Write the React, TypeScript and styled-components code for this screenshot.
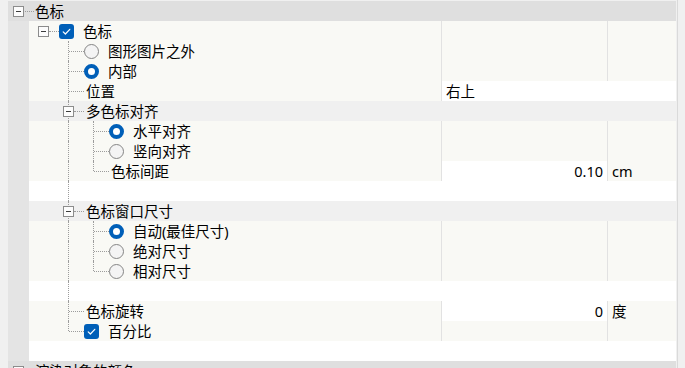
import styled, { createGlobalStyle } from "styled-components";

const GlobalStyle = createGlobalStyle`
  html, body {
    margin: 0;
    padding: 0;
    background: #f0f0f0;
  }
  body {
    font-family: "Noto Sans", "Noto Sans CJK SC", sans-serif;
    font-size: 14.5px;
    color: #000;
  }
`;

type Tone = "cream" | "gray" | "white";
type SlotKind = "blank" | "pipe" | "tee" | "elbow" | "expander" | "expander-pipe";
type Control = "check" | "radio-on" | "radio-off";

interface RowData {
  slots: SlotKind[];
  label?: string;
  control?: Control;
  tone: Tone;
  value?: string;
  unit?: string;
  span?: boolean;
}

const rows: RowData[] = [
  { slots: ["expander"], control: "check", label: "色标", tone: "cream" },
  { slots: ["blank", "tee"], control: "radio-off", label: "图形图片之外", tone: "cream" },
  { slots: ["blank", "tee"], control: "radio-on", label: "内部", tone: "cream" },
  { slots: ["blank", "tee"], label: "位置", tone: "cream", value: "右上", span: true },
  { slots: ["blank", "expander-pipe"], label: "多色标对齐", tone: "gray" },
  { slots: ["blank", "pipe", "tee"], control: "radio-on", label: "水平对齐", tone: "cream" },
  { slots: ["blank", "pipe", "tee"], control: "radio-off", label: "竖向对齐", tone: "cream" },
  { slots: ["blank", "pipe", "elbow"], label: "色标间距", tone: "cream", value: "0.10", unit: "cm" },
  { slots: ["blank", "pipe"], tone: "white" },
  { slots: ["blank", "expander-pipe"], label: "色标窗口尺寸", tone: "gray" },
  { slots: ["blank", "pipe", "tee"], control: "radio-on", label: "自动(最佳尺寸)", tone: "cream" },
  { slots: ["blank", "pipe", "tee"], control: "radio-off", label: "绝对尺寸", tone: "cream" },
  { slots: ["blank", "pipe", "elbow"], control: "radio-off", label: "相对尺寸", tone: "cream" },
  { slots: ["blank", "pipe"], tone: "white" },
  { slots: ["blank", "tee"], label: "色标旋转", tone: "cream", value: "0", unit: "度" },
  { slots: ["blank", "elbow"], control: "check", label: "百分比", tone: "cream" },
  { slots: ["blank"], tone: "white" },
];

const toneColor: Record<Tone, string> = {
  cream: "#f9f9f5",
  gray: "#f0f0f0",
  white: "#ffffff",
};

const dots = "1px dotted #9c9c9c";

const Frame = styled.div`
  display: flex;
  width: 685px;
  height: 368px;
  overflow: hidden;
`;

const List = styled.div`
  display: flex;
  flex-direction: column;
  width: 676px;
  padding-top: 1px;
`;

const Scrollbar = styled.div`
  flex: 1;
  background: #f0f0f0;
  border-left: 1px solid #dadada;
  margin-left: 1px;
`;

const RootRow = styled.div`
  display: flex;
  align-items: center;
  flex: 0 0 20px;
  height: 20px;
  border-left: 8px solid #f0f0f0;
  background: #dfdfdf;
  padding-left: 5px;
`;

const Connector = styled.span<{ $width: number }>`
  width: ${(p) => p.$width}px;
  margin-left: 1px;
  border-top: ${dots};
`;

const RootText = styled.span`
  margin-left: 1px;
  line-height: 20px;
`;

const Row = styled.div<{ $tone: Tone }>`
  display: grid;
  grid-template-columns: 29px 412px 166px 69px;
  flex: 0 0 20px;
  height: 20px;
  background: ${(p) => toneColor[p.$tone]};
`;

const Gutter = styled.div`
  box-sizing: border-box;
  border-left: 8px solid #f0f0f0;
  background: #e4e4e4;
`;

const LabelCell = styled.div`
  display: flex;
  align-items: center;
  padding-left: 1px;
  line-height: 20px;
  white-space: nowrap;
`;

const Slot = styled.span<{ $kind: SlotKind }>`
  position: relative;
  display: flex;
  align-items: center;
  flex: 0 0 25px;
  align-self: stretch;
  padding-left: 8px;
  box-sizing: border-box;

  &::before {
    content: "";
    position: absolute;
    left: 13px;
    top: 0;
    height: ${(p) => (p.$kind === "elbow" ? "10px" : "100%")};
    border-left: ${dots};
    display: ${(p) =>
      ["pipe", "tee", "elbow", "expander-pipe"].includes(p.$kind) ? "block" : "none"};
  }

  &::after {
    content: "";
    position: absolute;
    left: ${(p) => (p.$kind.startsWith("expander") ? "19px" : "14px")};
    right: -4px;
    top: 10px;
    border-top: ${dots};
    display: ${(p) => (p.$kind === "blank" || p.$kind === "pipe" ? "none" : "block")};
  }
`;

const Expander = styled.span`
  position: relative;
  z-index: 1;
  display: inline-flex;
  align-items: center;
  justify-content: center;
  box-sizing: border-box;
  width: 11px;
  height: 11px;
  border: 1px solid #8c8c8c;
  background: #fcfcfc;

  &::before {
    content: "";
    width: 5px;
    border-top: 1px solid #3c3c3c;
  }
`;

const Content = styled.span<{ $hasControl: boolean }>`
  display: inline-flex;
  align-items: center;
  gap: 9px;
  margin-left: ${(p) => (p.$hasControl ? "4px" : "6px")};
`;

const Radio = styled.span<{ $on: boolean }>`
  display: inline-block;
  box-sizing: border-box;
  width: 15px;
  height: 15px;
  border-radius: 50%;
  background: ${(p) => (p.$on ? "#ffffff" : "#f4f4f4")};
  border: ${(p) => (p.$on ? "4px solid #005fb8" : "1px solid #858585")};
`;

const ValueCell = styled.div<{ $edit: boolean; $divider: boolean; $span: boolean; $right: boolean }>`
  grid-column: ${(p) => (p.$span ? "span 2" : "auto")};
  box-sizing: border-box;
  background: ${(p) => (p.$edit ? "#ffffff" : "transparent")};
  border-left: ${(p) => (p.$divider ? "1px solid #e2e2e2" : "none")};
  text-align: ${(p) => (p.$right ? "right" : "left")};
  padding: ${(p) => (p.$right ? "0 4px 0 0" : "0 0 0 4px")};
  line-height: 20px;
`;

const UnitCell = styled.div<{ $divider: boolean }>`
  box-sizing: border-box;
  border-left: ${(p) => (p.$divider ? "1px solid #e2e2e2" : "none")};
  padding-left: 4px;
  line-height: 20px;
`;

const CheckBox = () => (
  <svg width="15" height="15" viewBox="0 0 15 15">
    <rect width="15" height="15" rx="3" fill="#005fb8" />
    <path
      d="M4.2 7.8 L6.4 10 L10.8 5.3"
      stroke="#fff"
      strokeWidth="1.2"
      fill="none"
      strokeLinecap="round"
      strokeLinejoin="round"
    />
  </svg>
);

const ControlMark = ({ control }: { control: Control }) =>
  control === "check" ? <CheckBox /> : <Radio $on={control === "radio-on"} />;

const PropertyRow = ({ row }: { row: RowData }) => {
  const lined = row.tone === "cream";
  const numeric = !!row.unit;
  return (
    <Row $tone={row.tone}>
      <Gutter />
      <LabelCell>
        {row.slots.map((kind, i) => (
          <Slot key={i} $kind={kind}>
            {kind.startsWith("expander") && <Expander />}
          </Slot>
        ))}
        {row.label && (
          <Content $hasControl={!!row.control}>
            {row.control && <ControlMark control={row.control} />}
            <span>{row.label}</span>
          </Content>
        )}
      </LabelCell>
      <ValueCell $edit={!!row.value} $divider={lined} $span={!!row.span} $right={numeric}>
        {row.value}
      </ValueCell>
      {!row.span && <UnitCell $divider={lined}>{row.unit}</UnitCell>}
    </Row>
  );
};

const App = () => (
  <>
    <GlobalStyle />
    <Frame>
      <List>
        <RootRow>
          <Expander />
          <Connector $width={9} />
          <RootText>色标</RootText>
        </RootRow>
        {rows.map((row, i) => (
          <PropertyRow key={i} row={row} />
        ))}
        <RootRow>
          <Expander />
          <Connector $width={9} />
          <RootText>渲染对象的颜色</RootText>
        </RootRow>
      </List>
      <Scrollbar />
    </Frame>
  </>
);

export default App;
